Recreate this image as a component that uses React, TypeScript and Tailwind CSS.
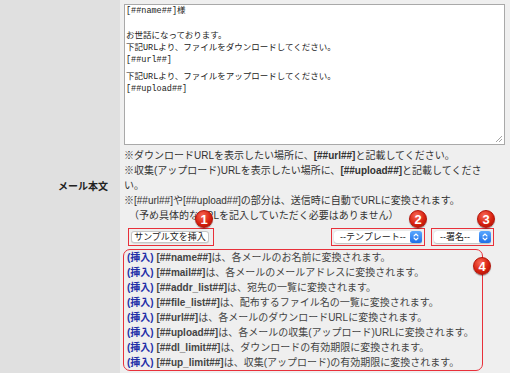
import React from 'react';

const Badge = ({ n, className }: { n: string; className: string }) => (
  <span
    className={`absolute flex h-[18px] w-[18px] items-center justify-center rounded-full border border-[#b3140a] bg-[radial-gradient(circle_at_40%_30%,#f86a58_0%,#d8220f_55%,#a60e05_100%)] text-[13px] font-bold leading-none text-white shadow-[0_1px_1px_rgba(0,0,0,0.35)] ${className}`}
  >
    {n}
  </span>
);

const Stepper = () => (
  <svg width="12" height="12" viewBox="0 0 12 12" className="shrink-0">
    <defs>
      <linearGradient id="stp" x1="0" y1="0" x2="0" y2="1">
        <stop offset="0" stopColor="#5aa8ff" />
        <stop offset="1" stopColor="#1f6fe8" />
      </linearGradient>
    </defs>
    <rect x="0" y="0" width="12" height="12" rx="2.5" fill="url(#stp)" />
    <path d="M4 5 L6 3 L8 5" fill="none" stroke="#fff" strokeWidth="1.1" strokeLinecap="round" strokeLinejoin="round" />
    <path d="M4 7 L6 9 L8 7" fill="none" stroke="#fff" strokeWidth="1.1" strokeLinecap="round" strokeLinejoin="round" />
  </svg>
);

const items = [
  { tag: '[##name##]', text: 'は、各メールのお名前に変換されます。' },
  { tag: '[##mail##]', text: 'は、各メールのメールアドレスに変換されます。' },
  { tag: '[##addr_list##]', text: 'は、宛先の一覧に変換されます。' },
  { tag: '[##file_list##]', text: 'は、配布するファイル名の一覧に変換されます。' },
  { tag: '[##url##]', text: 'は、各メールのダウンロードURLに変換されます。' },
  { tag: '[##upload##]', text: 'は、各メールの収集(アップロード)URLに変換されます。' },
  { tag: '[##dl_limit##]', text: 'は、ダウンロードの有効期限に変換されます。' },
  { tag: '[##up_limit##]', text: 'は、収集(アップロード)の有効期限に変換されます。' },
];

export default function App() {
  return (
    <div className="relative flex h-[373px] w-[510px] overflow-hidden bg-[#efefef] font-['Liberation_Sans','Noto_Sans_CJK_JP',sans-serif] text-[#333]">
      {/* ラベル列 */}
      <div className="flex w-[120px] shrink-0 items-center justify-end bg-[#e0e0e0] pr-[12px]">
        <span className="text-[10px] font-bold text-[#222]">メール本文</span>
      </div>

      {/* 入力列 */}
      <div className="flex flex-1 flex-col pl-[4px] pr-[5px] pt-[4px]">
        <div className="relative h-[141px] w-full border border-[#a9a9a9] bg-white pl-[1px] font-['Liberation_Mono','Noto_Sans_CJK_JP',monospace] text-[8.5px] text-[#222]">
          <div className="h-[12px] leading-[12px]">[##name##]様</div>
          <div className="h-[13px]" />
          <div className="h-[12px] leading-[12px]">お世話になっております。</div>
          <div className="h-[12px] leading-[12px]">下記URLより、ファイルをダウンロードしてください。</div>
          <div className="h-[12px] leading-[12px]">[##url##]</div>
          <div className="h-[5px]" />
          <div className="h-[12px] leading-[12px]">下記URLより、ファイルをアップロードしてください。</div>
          <div className="h-[12px] leading-[12px]">[##upload##]</div>
          <svg width="8" height="8" viewBox="0 0 8 8" className="absolute bottom-[1px] right-[1px]">
            <path d="M1 7 L7 1 M4 7 L7 4" stroke="#9a9a9a" strokeWidth="0.9" />
          </svg>
        </div>

        <div className="mt-[3px] pr-[15px] text-[10px] leading-[15px] text-[#333]">
          <p>
            ※ダウンロードURLを表示したい場所に、<b>[##url##]</b>と記載してください。
          </p>
          <p>
            ※収集(アップロード)URLを表示したい場所に、<b>[##upload##]</b>と記載してください。
          </p>
          <p>※[##url##]や[##upload##]の部分は、送信時に自動でURLに変換されます。</p>
          <p>　（予め具体的なURLを記入していただく必要はありません）</p>
        </div>

        <div className="mt-[5px] flex h-[18px] items-stretch">
          <div className="ml-[4px] flex w-[86px] items-center border border-[#e8303a] pl-[2px]">
            <button className="flex h-[12px] w-[78px] items-center justify-center rounded-[3px] border border-[#c6c6c6] bg-white text-[9px] leading-none text-[#222] shadow-[0_0.5px_0.5px_rgba(0,0,0,0.15)]">
              サンプル文を挿入
            </button>
          </div>
          <div className="ml-auto flex w-[94px] items-center border border-[#e8303a] px-[2px]">
            <div className="flex h-[12px] w-full items-center justify-between rounded-[3px] bg-white pl-[6px] text-[9px] leading-none text-[#222] shadow-[0_0.5px_1px_rgba(0,0,0,0.2)]">
              <span>--テンプレート--</span>
              <Stepper />
            </div>
          </div>
          <div className="ml-[6px] mr-[11px] flex w-[63px] items-center border border-[#e8303a] px-[2px]">
            <div className="flex h-[12px] w-full items-center justify-between rounded-[3px] bg-white pl-[6px] text-[9px] leading-none text-[#222] shadow-[0_0.5px_1px_rgba(0,0,0,0.2)]">
              <span>--署名--</span>
              <Stepper />
            </div>
          </div>
        </div>

        <div className="mt-[3px] w-[360px] -ml-[1px] rounded-[7px] border border-[#e8303a] pl-[3px] text-[10px] leading-[15px] text-[#444]">
          {items.map((it) => (
            <div key={it.tag} className="whitespace-nowrap">
              <span className="font-bold text-[#1f2fa8]">(挿入)</span>{' '}
              <span className="font-semibold">{it.tag}</span>
              {it.text}
            </div>
          ))}
        </div>
      </div>

      <Badge n="1" className="left-[195px] top-[210px]" />
      <Badge n="2" className="left-[409px] top-[210px]" />
      <Badge n="3" className="left-[477px] top-[210px]" />
      <Badge n="4" className="left-[473px] top-[257px]" />
    </div>
  );
}
